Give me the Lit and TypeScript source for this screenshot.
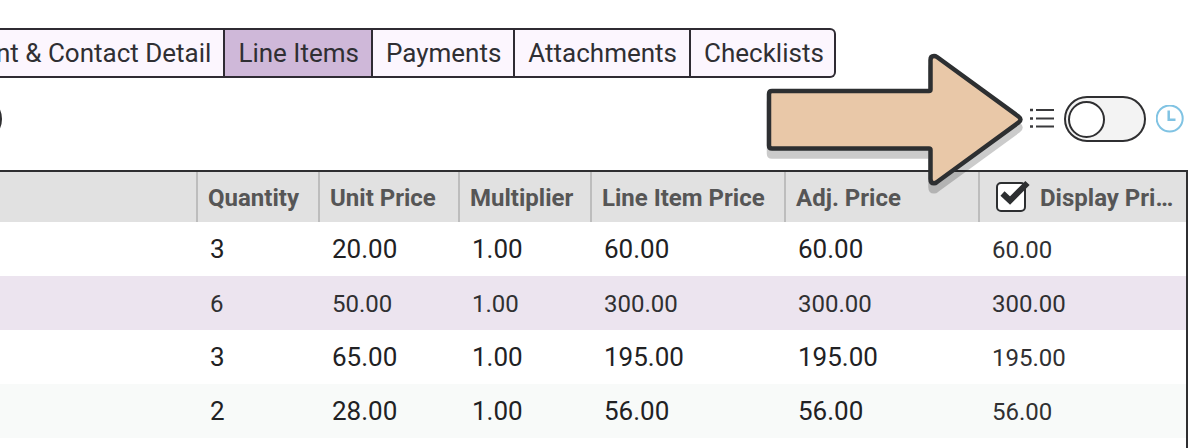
import { LitElement, html, css } from "lit";
import { customElement, state } from "lit/decorators.js";
import { classMap } from "lit/directives/class-map.js";

const TABS = ["nt & Contact Detail", "Line Items", "Payments", "Attachments", "Checklists"];

const ROWS = [
  { quantity: "3", unit: "20.00", multiplier: "1.00", line: "60.00", adjusted: "60.00", display: "60.00" },
  { quantity: "6", unit: "50.00", multiplier: "1.00", line: "300.00", adjusted: "300.00", display: "300.00" },
  { quantity: "3", unit: "65.00", multiplier: "1.00", line: "195.00", adjusted: "195.00", display: "195.00" },
  { quantity: "2", unit: "28.00", multiplier: "1.00", line: "56.00", adjusted: "56.00", display: "56.00" },
];

@customElement("line-items-toolbar")
class LineItemsToolbar extends LitElement {
  @state() private timeline = false;

  static styles = css`
    :host {
      display: block;
      position: relative;
    }
    .bar {
      display: flex;
      align-items: center;
      gap: 10px;
      height: 46px;
      padding: 18px 16px 28px 0;
    }
    .action {
      box-sizing: border-box;
      width: 60px;
      height: 46px;
      margin: 0 auto 0 -58px;
      padding: 0;
      border: 2px solid #2f2f31;
      border-radius: 23px;
      background: #fff;
    }
    .list {
      width: 25px;
      height: 22px;
    }
    .clock {
      width: 28px;
      height: 28px;
    }
    .switch {
      appearance: none;
      box-sizing: border-box;
      display: flex;
      align-items: center;
      width: 82px;
      height: 46px;
      margin: 0;
      padding: 0 2px;
      border: 2px solid #2f2f31;
      border-radius: 23px;
      background: #f3f3f3;
    }
    .switch::before {
      content: "";
      box-sizing: border-box;
      width: 37px;
      height: 37px;
      border: 2px solid #2f2f31;
      border-radius: 50%;
      background: #fff;
    }
    .switch:checked {
      justify-content: flex-end;
    }
    .pointer {
      position: absolute;
      right: 170px;
      top: -28px;
      width: 270px;
      height: 150px;
      pointer-events: none;
    }
  `;

  render() {
    return html`
      <div class="bar">
        <button class="action" aria-label="Actions"></button>
        <svg class="list" viewBox="0 0 25 22" aria-hidden="true">
          <path d="M7 2H25.500M7 10.500H25.500M7 18.500H25.500" stroke="#3a3a3c" stroke-width="2" />
          <path d="M1 2H4M1 10.500H4M1 18.500H4" stroke="#3a3a3c" stroke-width="2.6" />
        </svg>
        <input
          class="switch"
          type="checkbox"
          role="switch"
          aria-label="Timeline view"
          .checked=${this.timeline}
          @change=${(e: Event) => (this.timeline = (e.target as HTMLInputElement).checked)}
        />
        <svg class="clock" viewBox="0 0 28 28" fill="none" stroke="#80c3e3" aria-hidden="true">
          <circle cx="13.700" cy="13.500" r="13" stroke-width="2" />
          <path d="M12.700 5.500V14.700H19.500" stroke-width="2.500" />
        </svg>
      </div>
      <svg class="pointer" viewBox="0 0 270 150" aria-hidden="true">
        <defs>
          <path
            id="arrow"
            d="M12 41H169Q170.500 41 170.500 39.500V10Q170.500 6 174 6Q175.500 6 177 7L258.500 66.500Q262.500 69.500 258.500 72.500L177 132Q175.500 133.300 174 133.300Q170.500 133.300 170.500 129V100Q170.500 98.500 169 98.500H12Q9 98.500 9 95.500V44Q9 41 12 41Z"
            stroke-width="4.500"
            stroke-linejoin="round"
          />
        </defs>
        <g opacity="0.2"><use href="#arrow" y="8" fill="#000" stroke="#000" /></g>
        <use href="#arrow" fill="#e9c8a8" stroke="#2d2f31" />
      </svg>
    `;
  }
}

@customElement("line-items-table")
class LineItemsTable extends LitElement {
  @state() private selected = 1;

  static styles = css`
    :host {
      display: block;
      border: solid #2f2f31;
      border-width: 2px 2px 0 0;
      color: #212123;
    }
    table {
      width: 100%;
      table-layout: fixed;
      border-collapse: separate;
      border-spacing: 0;
    }
    .xs { width: 122px; }
    .sm { width: 132px; }
    .md { width: 140px; }
    .lg { width: 194px; }
    .xl { width: 208px; }
    th {
      box-sizing: border-box;
      height: 50px;
      padding: 2px 0 0 10px;
      border-left: 2px solid #bdbdbd;
      background: #e1e1e1;
      color: #565656;
      font-size: 24px;
      line-height: 28px;
      font-weight: 700;
      text-align: left;
      white-space: nowrap;
    }
    th.blank {
      border-left: 0;
    }
    td {
      box-sizing: border-box;
      height: 54px;
      padding: 0 0 0 14px;
      font-size: 26px;
      line-height: 30px;
    }
    td.display,
    .selected td {
      padding-top: 2px;
      color: #303032;
      font-size: 24px;
    }
    tr:nth-child(even) td {
      background: #f8faf9;
    }
    tr.selected td {
      background: #ece4ef;
    }
    .check {
      display: flex;
      align-items: center;
      gap: 14px;
      padding-left: 6px;
    }
    .box {
      position: relative;
      display: flex;
      margin-top: -2px;
    }
    .box input {
      appearance: none;
      box-sizing: border-box;
      width: 30px;
      height: 30px;
      margin: 0;
      border: 2px solid #2d2f31;
      border-radius: 5px;
      background: #fff;
    }
    .mark {
      position: absolute;
      left: 0;
      top: -2px;
      width: 34px;
      height: 32px;
      pointer-events: none;
    }
    input:not(:checked) + .mark {
      display: none;
    }
  `;

  render() {
    return html`
      <table>
        <colgroup>
          <col />
          <col class="xs" />
          <col class="md" />
          <col class="sm" />
          <col class="lg" />
          <col class="lg" />
          <col class="xl" />
        </colgroup>
        <thead>
          <tr>
            <th class="blank"></th>
            <th>Quantity</th>
            <th>Unit Price</th>
            <th>Multiplier</th>
            <th>Line Item Price</th>
            <th>Adj. Price</th>
            <th>
              <label class="check">
                <span class="box">
                  <input type="checkbox" checked />
                  <svg class="mark" viewBox="0 0 34 32" aria-hidden="true">
                    <path d="M6.500 13.500L14 20.500L31.500 3" fill="none" stroke="#2d2f31" stroke-width="6" />
                  </svg>
                </span>
                <span>Display Pri…</span>
              </label>
            </th>
          </tr>
        </thead>
        <tbody>
          ${ROWS.map(
            (row, i) => html`
              <tr class=${classMap({ selected: i === this.selected })} @click=${() => (this.selected = i)}>
                <td></td>
                <td>${row.quantity}</td>
                <td>${row.unit}</td>
                <td>${row.multiplier}</td>
                <td>${row.line}</td>
                <td>${row.adjusted}</td>
                <td class="display">${row.display}</td>
              </tr>
            `,
          )}
        </tbody>
      </table>
    `;
  }
}

@customElement("app-root")
class AppRoot extends LitElement {
  @state() private active = 1;

  static styles = css`
    :host {
      display: flex;
      flex-direction: column;
      box-sizing: border-box;
      min-height: 100vh;
      padding-top: 28px;
      overflow: hidden;
      background: #fff;
      font-family: Roboto, sans-serif;
    }
    .tabs {
      display: flex;
      margin-left: -4px;
    }
    .tab {
      box-sizing: border-box;
      height: 50px;
      margin: 0;
      padding: 0 12px 0 13px;
      border: 2px solid #2f2b33;
      border-left-width: 0;
      background: #fcf6fe;
      color: #2f2f33;
      font: 400 26px/30px Roboto, sans-serif;
      white-space: nowrap;
    }
    .tab:first-child {
      padding-left: 0;
    }
    .tab:last-child {
      padding-right: 10px;
      border-radius: 0 6px 6px 0;
    }
    .tab.active {
      background: #cfb8d9;
    }
    line-items-toolbar {
      z-index: 1;
    }
    line-items-table {
      flex: 1;
      margin-right: 12px;
    }
  `;

  render() {
    return html`
      <nav class="tabs" role="tablist">
        ${TABS.map(
          (name, i) => html`<button
            class=${classMap({ tab: true, active: i === this.active })}
            role="tab"
            aria-selected=${i === this.active}
            @click=${() => (this.active = i)}
          >${name}</button>`,
        )}
      </nav>
      <line-items-toolbar></line-items-toolbar>
      <line-items-table></line-items-table>
    `;
  }
}
